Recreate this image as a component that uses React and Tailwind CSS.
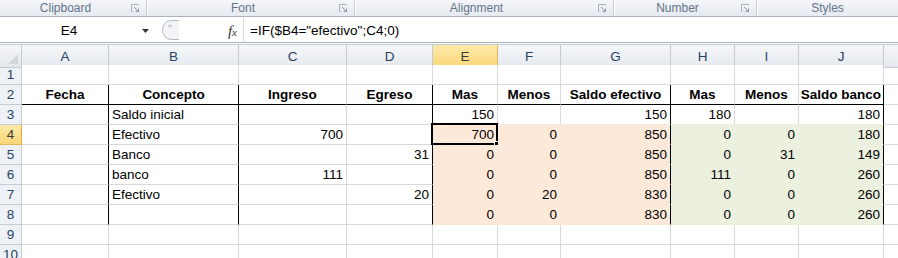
import React from "react";

const COLS = ["A", "B", "C", "D", "E", "F", "G", "H", "I", "J"];
const GRID = "grid grid-cols-[22px_87px_130px_108px_86px_65px_63px_110px_64px_64px_85px_1fr]";

// row data: [A..J]
const ROWS = [
  ["", "", "", "", "", "", "", "", "", ""],
  ["Fecha", "Concepto", "Ingreso", "Egreso", "Mas", "Menos", "Saldo efectivo", "Mas", "Menos", "Saldo banco"],
  ["", "Saldo inicial", "", "", "150", "", "150", "180", "", "180"],
  ["", "Efectivo", "700", "", "700", "0", "850", "0", "0", "180"],
  ["", "Banco", "", "31", "0", "0", "850", "0", "31", "149"],
  ["", "banco", "111", "", "0", "0", "850", "111", "0", "260"],
  ["", "Efectivo", "", "20", "0", "20", "830", "0", "0", "260"],
  ["", "", "", "", "0", "0", "830", "0", "0", "260"],
  ["", "", "", "", "", "", "", "", "", ""],
  ["", "", "", "", "", "", "", "", "", ""],
];

const BLACK_RIGHT = ["A", "B", "D", "G", "J"];

function fillOf(r, c) {
  if (r < 4 || r > 8) return null;
  if (["E", "F", "G"].includes(c)) return "peach";
  if (["H", "I", "J"].includes(c)) return "green";
  return null;
}

function Cell({ r, c, value }) {
  const fill = fillOf(r, c);
  const blackRight = r >= 2 && r <= 8 && BLACK_RIGHT.includes(c);
  const blackBottom = r === 2;
  const below = fillOf(r + 1, c);

  let bg = "bg-white";
  if (fill === "peach") bg = "bg-[#fde9d9]";
  if (fill === "green") bg = "bg-[#ebf1de]";

  let br = "border-r-[#d9d9d9]";
  if (fill === "peach") br = "border-r-[#fde9d9]";
  if (fill === "green") br = "border-r-[#ebf1de]";
  if (blackRight) br = "border-r-black";

  let bb = "border-b-[#d9d9d9]";
  if (fill === "peach" || below === "peach") bb = "border-b-[#fde9d9]";
  if (fill === "green" || below === "green") bb = "border-b-[#ebf1de]";
  if (blackBottom) bb = "border-b-black";

  const isNum = /^\d+$/.test(value);
  const header = r === 2;
  let align = "justify-start pl-[3px]";
  if (isNum) align = "justify-end pr-[3px]";
  if (header) align = "justify-center";

  return (
    <div
      className={`relative h-[20px] flex items-end pb-[1px] leading-[16px] border-r border-b ${br} ${bb} ${bg} ${align} ${
        header ? "font-bold" : ""
      } text-[13.5px] text-black whitespace-nowrap`}
    >
      {value}
      {r === 4 && c === "E" && (
        <div className="absolute -left-[2px] -top-[2px] w-[67px] h-[22px] border-2 border-black">
          <div className="absolute -right-[4px] -bottom-[4px] w-[6px] h-[6px] bg-black border border-white" />
        </div>
      )}
    </div>
  );
}

function Launcher() {
  return (
    <svg width="9" height="9" viewBox="0 0 9 9" className="shrink-0">
      <path d="M0.5 0.5h7v1M0.5 0.5v7h1" stroke="#a7b1bd" fill="none" />
      <path d="M3 3l4.5 4.5M4.5 7.5h3v-3" stroke="#8a96a4" fill="none" />
    </svg>
  );
}

function Group({ label, w, launcher }) {
  return (
    <div
      className={`${w} h-full flex items-center border-r border-r-[#c6ced8] shadow-[1px_0_0_#fff]`}
    >
      <span className="flex-1 text-center text-[12px] text-[#64748a]">{label}</span>
      {launcher && (
        <span className="pr-[6px] flex items-center">
          <Launcher />
        </span>
      )}
    </div>
  );
}

export default function App() {
  return (
    <div
      className="w-[898px] h-[258px] overflow-hidden bg-white"
      style={{ fontFamily: '"Liberation Sans", Arial, sans-serif' }}
    >
      {/* ribbon group labels */}
      <div className="h-[17px] flex bg-gradient-to-b from-[#f4f6f9] to-[#e6ebf1] border-b border-b-[#a9b4c2]">
        <Group label="Clipboard" w="w-[147px]" launcher />
        <Group label="Font" w="w-[208px]" launcher />
        <Group label="Alignment" w="w-[259px]" launcher />
        <Group label="Number" w="w-[143px]" launcher />
        <div className="flex-1 flex items-center justify-center text-[12px] text-[#64748a]">
          Styles
        </div>
      </div>

      {/* formula bar */}
      <div className="h-[25px] mt-[1px] flex items-center bg-white border-b border-b-[#a7b0bb]">
        <div className="w-[138px] text-center text-[13.5px] text-black pt-[2px]">E4</div>
        <svg width="8" height="5" viewBox="0 0 8 5" className="ml-[4px] mt-[2px]">
          <path d="M0 0h7L3.5 4z" fill="#333" />
        </svg>
        <svg width="18" height="22" viewBox="0 0 18 22" className="ml-[12px]">
          <path
            d="M17 1.5H9A8.5 9.5 0 0 0 9 20.5H17"
            fill="#f3f4f6"
            stroke="#b5bcc6"
          />
          <ellipse cx="8" cy="7" rx="2" ry="1.3" fill="#c9ced6" />
        </svg>
        <div className="flex-1" />
        <div
          className="w-[26px] pr-[6px] text-right text-[15px] italic text-[#333] pt-[2px]"
          style={{ fontFamily: '"Liberation Serif", serif' }}
        >
          f<span className="text-[11px]">x</span>
        </div>
        <div className="h-full border-l border-l-[#d5dae0] w-[655px] flex items-center pl-[6px] pt-[2px] text-[13.5px] text-black">
          =IF($B4="efectivo";C4;0)
        </div>
      </div>

      {/* column headers */}
      <div className={`${GRID} h-[21px] mt-[1px] border-t border-t-[#c5cbd3]`}>
        <div className="relative bg-gradient-to-b from-[#f4f6f9] to-[#e4e8ed] border-r border-r-[#c5cbd3] border-b border-b-[#c5cbd3]">
          <svg width="10" height="10" viewBox="0 0 10 10" className="absolute right-[3px] bottom-[3px]">
            <path d="M10 0V10H0z" fill="#d3d7dd" />
          </svg>
        </div>
        {COLS.map((c) => (
          <div
            key={c}
            className={`flex items-center justify-center pt-[2px] text-[13.5px] border-r border-b ${
              c === "E"
                ? "bg-gradient-to-b from-[#fdeaa8] to-[#f9d779] border-r-[#e2b85a] border-b-[#f0a83b] text-[#3a3a3a]"
                : "bg-gradient-to-b from-[#f5f7f9] to-[#e5e9ee] border-r-[#c5cbd3] border-b-[#c5cbd3] text-[#27415f]"
            }`}
          >
            {c}
          </div>
        ))}
        <div className="bg-gradient-to-b from-[#f5f7f9] to-[#e5e9ee] border-b border-b-[#c5cbd3]" />
      </div>

      {/* sheet rows */}
      {ROWS.map((row, i) => {
        const r = i + 1;
        return (
          <div key={r} className={GRID}>
            <div
              className={`h-[20px] flex items-end pb-[1px] leading-[16px] justify-center text-[13.5px] border-r border-b ${
                r === 4
                  ? "bg-gradient-to-b from-[#fdeaa8] to-[#f9d779] border-r-[#f0a83b] border-b-[#e2b85a] text-[#3a3a3a]"
                  : "bg-[#eef1f5] border-r-[#c5cbd3] border-b-[#c5cbd3] text-[#27415f]"
              }`}
            >
              {r}
            </div>
            {COLS.map((c, j) => (
              <Cell key={c} r={r} c={c} value={row[j]} />
            ))}
            <div className="h-[20px] border-b border-b-[#d9d9d9]" />
          </div>
        );
      })}
    </div>
  );
}
